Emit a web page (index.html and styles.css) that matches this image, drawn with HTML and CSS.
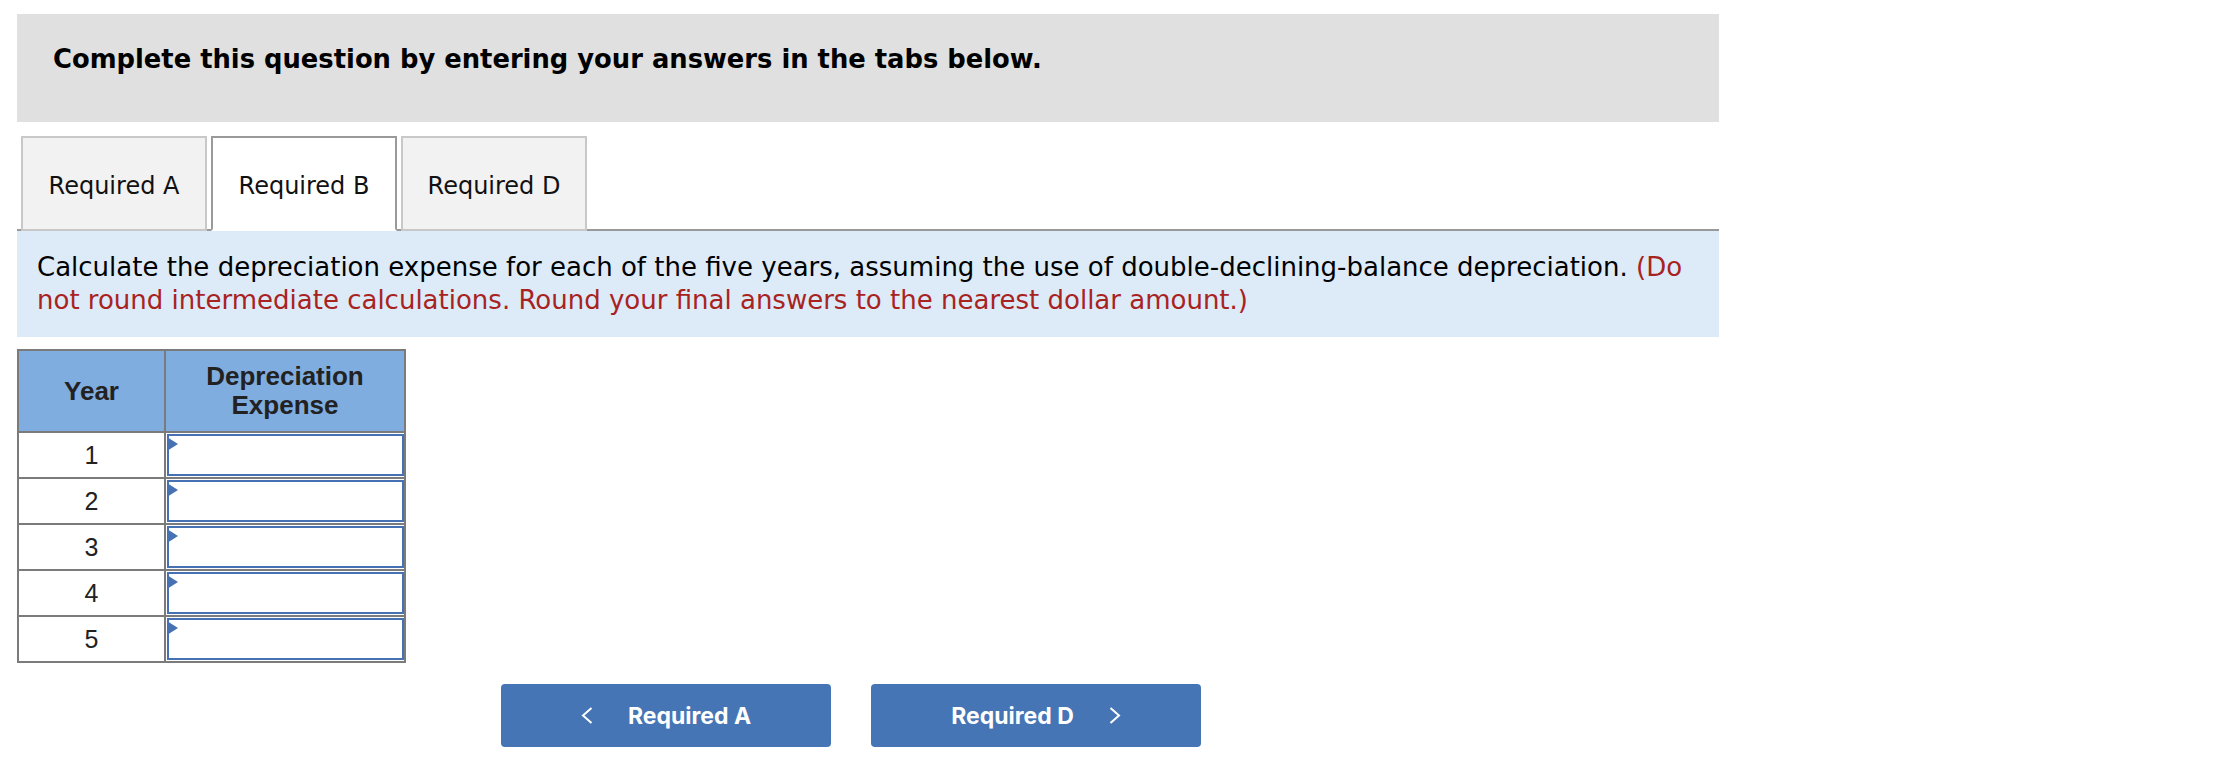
FILE: index.html
```html
<!DOCTYPE html>
<html lang="en">
<head>
<meta charset="utf-8">
<title>Required B</title>
<link rel="stylesheet" href="styles.css">
</head>
<body>
<div class="page">
  <div class="banner">
    <h2 class="banner-title">Complete this question by entering your answers in the tabs below.</h2>
  </div>

  <div class="tabs">
    <div class="tab">Required A</div>
    <div class="tab tab-active">Required B</div>
    <div class="tab">Required D</div>
  </div>

  <div class="instructions">
    Calculate the depreciation expense for each of the five years, assuming the use of double-declining-balance depreciation. <span class="note">(Do not round intermediate calculations. Round your final answers to the nearest dollar amount.)</span>
  </div>

  <table class="grid">
    <thead>
      <tr>
        <th class="col-year">Year</th>
        <th class="col-exp">Depreciation<br>Expense</th>
      </tr>
    </thead>
    <tbody>
      <tr><td class="year">1</td><td class="entry"><div class="field"><span class="marker"></span></div></td></tr>
      <tr><td class="year">2</td><td class="entry"><div class="field"><span class="marker"></span></div></td></tr>
      <tr><td class="year">3</td><td class="entry"><div class="field"><span class="marker"></span></div></td></tr>
      <tr><td class="year">4</td><td class="entry"><div class="field"><span class="marker"></span></div></td></tr>
      <tr><td class="year">5</td><td class="entry"><div class="field"><span class="marker"></span></div></td></tr>
    </tbody>
  </table>

  <div class="nav">
    <button class="nav-btn">
      <svg class="chev" width="12" height="17" viewBox="0 0 12 17"><polyline points="10.5,1 2,8.5 10.5,16" fill="none" stroke="#fff" stroke-width="2"/></svg>
      <span>Required A</span>
    </button>
    <button class="nav-btn">
      <span>Required D</span>
      <svg class="chev" width="12" height="17" viewBox="0 0 12 17"><polyline points="1.5,1 10,8.5 1.5,16" fill="none" stroke="#fff" stroke-width="2"/></svg>
    </button>
  </div>
</div>
</body>
</html>
```

FILE: styles.css
```css
html, body {
  margin: 0;
  padding: 0;
  background: #ffffff;
}

.page {
  width: 1702px;
  margin: 14px 0 0 17px;
}

.banner {
  background: #e0e0e0;
  height: 108px;
  box-sizing: border-box;
  padding: 30px 0 0 36px;
}

.banner-title {
  margin: 0;
  font-family: "DejaVu Sans", Verdana, sans-serif;
  font-weight: bold;
  font-size: 25.8px;
  color: #000;
}

.tabs {
  display: flex;
  gap: 4px;
  padding-left: 4px;
  margin-top: 14px;
  border-bottom: 2px solid #999999;
  height: 93px;
}

.tab {
  width: 186px;
  height: 95px;
  box-sizing: border-box;
  border: 2px solid #c8c8c8;
  background: #f2f2f2;
  padding-top: 5px;
  display: flex;
  align-items: center;
  justify-content: center;
  font-family: "DejaVu Sans", Verdana, sans-serif;
  font-size: 24px;
  color: #111;
}

.tab-active {
  background: #ffffff;
  border-color: #9a9a9a;
  border-bottom: 2px solid #ffffff;
  position: relative;
  z-index: 1;
}

.instructions {
  background: #ddeaf7;
  padding: 20px 18px 20px 20px;
  font-family: "DejaVu Sans", Verdana, sans-serif;
  font-size: 26px;
  line-height: 33px;
  color: #000;
}

.note {
  color: #a8231f;
}

.grid {
  margin-top: 12px;
  border-collapse: collapse;
  border: 2px solid #7b7b7b;
  font-family: "Liberation Sans", Arial, sans-serif;
  color: #222;
}

.grid th {
  background: #80addf;
  border: 2px solid #7b7b7b;
  font-weight: bold;
  font-size: 26px;
  line-height: 29px;
  height: 80px;
  padding: 0;
  text-align: center;
}

.col-year {
  width: 145px;
}

.col-exp {
  width: 238px;
}

.grid td {
  border: 2px solid #7b7b7b;
  height: 43px;
  padding: 0;
}

.year {
  text-align: center;
  font-size: 25px;
}

.grid td.entry {
  padding: 1px 0 0 1px;
  vertical-align: top;
}

.field {
  position: relative;
  box-sizing: border-box;
  height: 42px;
  border: 2px solid #4672b4;
  background: #fff;
}

.marker {
  position: absolute;
  left: -2px;
  top: 1px;
  width: 0;
  height: 0;
  border-top: 7px solid transparent;
  border-bottom: 7px solid transparent;
  border-left: 11px solid #4672b4;
}

.nav {
  display: flex;
  gap: 40px;
  margin: 21px 0 0 484px;
}

.nav-btn {
  width: 330px;
  height: 63px;
  border: none;
  border-radius: 4px;
  background: #4575b5;
  color: #fff;
  font-family: Inter, Roboto, sans-serif;
  font-weight: 700;
  font-size: 23px;
  display: flex;
  align-items: center;
  justify-content: center;
  gap: 35px;
  padding: 0;
}

.chev {
  display: block;
}
```
